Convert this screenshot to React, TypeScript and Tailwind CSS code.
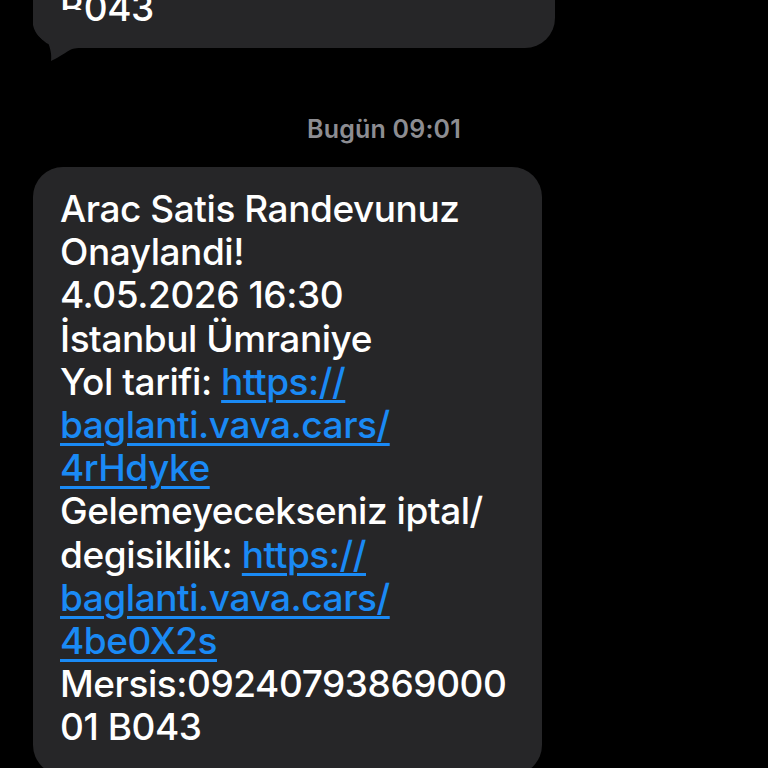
import React from "react";

const Link = ({ children }: { children: React.ReactNode }) => (
  <span className="text-[#1a8af5] underline decoration-[2.5px] underline-offset-[5px]">{children}</span>
);

export default function App() {
  return (
    <div
      className="w-[768px] h-[768px] bg-black overflow-hidden flex flex-col"
      style={{ fontFamily: "Inter, 'Noto Sans', sans-serif" }}
    >
      {/* previous bubble (cut off at top) */}
      <div className="relative shrink-0 ml-[33px] w-[522px] h-[48px] bg-[#262628] rounded-br-[30px] rounded-bl-[30px]">
        <div className="-mt-[14px] pl-[27px] text-[37px] leading-[43px] text-white font-medium tracking-[-0.45px]">B043</div>
        <svg
          className="absolute left-0 top-[10px]"
          width="52"
          height="54"
          viewBox="33 10 52 54"
        >
          <path
            d="M33 10 L33 25 C35 35 42 40 48 42 C50 48 52 54 51 61 C56 59 63 54 70 50 C74 48 78 48 85 48 L85 10 Z"
            fill="#262628"
          />
        </svg>
      </div>

      {/* timestamp */}
      <div className="shrink-0 mt-[67px] h-[28px] flex items-center justify-center text-[25px] leading-[28px] font-semibold tracking-[0.2px] text-[#8d8d92]">
        Bugün 09:01
      </div>

      {/* main bubble */}
      <div className="shrink-0 mt-[24px] ml-[33px] w-[509px] bg-[#262628] rounded-[30px] pt-[20px] pb-[26px] pl-[27px] pr-[20px] text-[37px] leading-[43.2px] text-white font-medium tracking-[-0.45px]">
        <div>Arac Satis Randevunuz</div>
        <div>Onaylandi!</div>
        <div>4.05.2026 16:30</div>
        <div>İstanbul Ümraniye</div>
        <div>
          Yol tarifi: <Link>https://</Link>
        </div>
        <div>
          <Link>baglanti.vava.cars/</Link>
        </div>
        <div>
          <Link>4rHdyke</Link>
        </div>
        <div>Gelemeyecekseniz iptal/</div>
        <div>
          degisiklik: <Link>https://</Link>
        </div>
        <div>
          <Link>baglanti.vava.cars/</Link>
        </div>
        <div>
          <Link>4be0X2s</Link>
        </div>
        <div>Mersis:09240793869000</div>
        <div>01 B043</div>
      </div>
    </div>
  );
}
